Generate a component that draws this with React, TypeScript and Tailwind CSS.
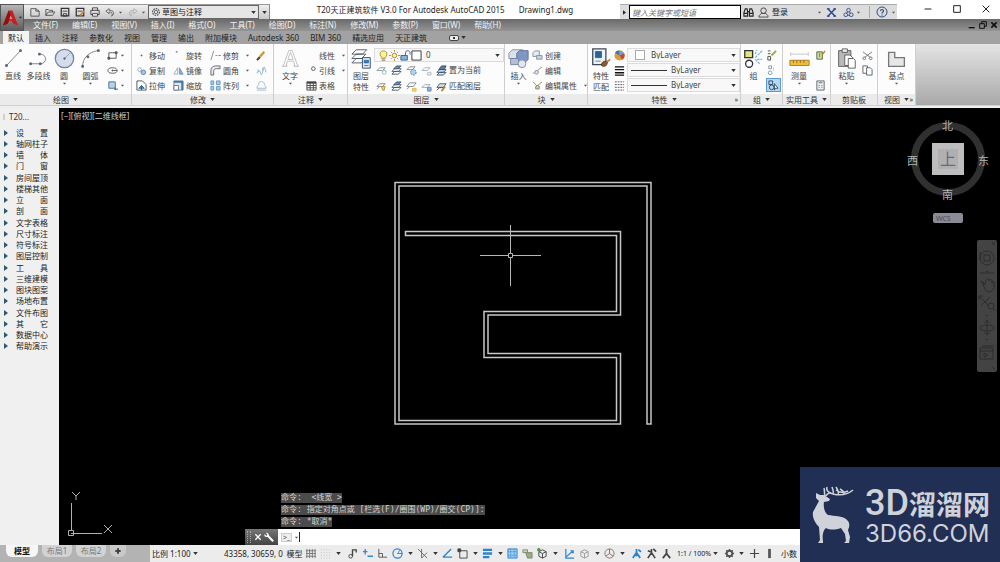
import { useState } from "react"
import type { ReactNode } from "react"
import { clsx } from "clsx"

interface IconProps {
  children: ReactNode
  box?: number
  className?: string
}

function Icon({ children, box = 12, className = "w-[11px] h-[11px]" }: IconProps) {
  return (
    <svg
      viewBox={`0 0 ${box} ${box}`}
      className={clsx("shrink-0", className)}
      fill="none"
      stroke="#6b7480"
      strokeWidth={1}
      aria-hidden="true"
    >
      {children}
    </svg>
  )
}

function Caret({ className = "text-[#333]" }: { className?: string }) {
  return (
    <svg viewBox="0 0 6 4" className={clsx("w-[5px] h-[3px] shrink-0", className)} aria-hidden="true">
      <path d="M0 0h6L3 4z" fill="currentColor" />
    </svg>
  )
}

function Dot() {
  return <Caret className="text-[#555] scale-75" />
}

/* ---------- icons ---------- */

const small: Record<string, ReactNode> = {
  newFile: <path d="M1 2h6l4 3v6H1zM7 2v3h4" stroke="#444" />,
  open: <path d="M1 10V3h3l1 1h4v2M1 10l3-4h8l-3 4z" stroke="#444" />,
  save: <g stroke="#333"><path d="M1.5 1.5h9v9h-9z" strokeWidth="1.5" /><path d="M3 5h6M4 8v3h4V8z" /></g>,
  saveAs: <g stroke="#333"><path d="M1.5 1.5h9v9h-9z" strokeWidth="1.5" /><path d="M3 5h6" /><path d="M6 10l5-5" stroke="#c98a3a" strokeWidth="2" /></g>,
  print: <g stroke="#333"><path d="M3 4V1h6v3M1 4h10v5H1z" /><path d="M3 8h6v3H3z" fill="#fff" /></g>,
  undo: <path d="M5 2L1 5l4 3V6c4 0 4 2 3 5 4-3 3-7-3-7z" stroke="#555" />,
  redo: <path d="M7 2l4 3-4 3V6C3 6 3 8 4 11 0 8 1 4 7 4z" stroke="#aaa" />,
  gear: <g stroke="#555"><circle cx="6" cy="6" r="4" strokeWidth="1.5" strokeDasharray="2 1" /><circle cx="6" cy="6" r="2" /></g>,
  rect: <g stroke="#555"><path d="M2 3h8v6H2z" /><path d="M1 8h2v2H1zM9 2h2v2H9z" fill="#555" /></g>,
  ellipse: <g stroke="#555"><ellipse cx="6" cy="6" rx="5" ry="3" /><path d="M6 5v2M5 6h6" /></g>,
  hatch: <g><path d="M2 2h7v7H2z" fill="#b7d3ea" stroke="#3d6f9c" /><path d="M9 8v3M8 10h4" stroke="#555" /></g>,
  move: <path d="M6 5v2M5 6h2" stroke="#667" />,
  copy: <g><circle cx="4" cy="5" r="2" stroke="#9ab" /><circle cx="8" cy="8" r="2.5" fill="#a8c4de" stroke="#5c86ad" /></g>,
  stretch: <g><path d="M1 1h6l4 4v6H1z" stroke="#456" fill="#fff" /><path d="M3 9l3-3 3 3zM6 6v5" stroke="#245f94" fill="#6fa2cf" /></g>,
  rotate: <path d="M4 1v2M3 2h2" stroke="#889" />,
  mirror: <g><path d="M5 10V3l-4 7z" stroke="#aab" /><path d="M7 10V3l4 7z" fill="#8db2d6" stroke="#6c93bb" /></g>,
  scale: <g><path d="M1 1h10v10H1z" fill="#dfe9f2" stroke="#6d8296" /><path d="M1 6h5v5H1z" fill="#fff" /><path d="M1 2h10M10 1v10" stroke="#3e79ad" strokeWidth="2" /></g>,
  trim: <path d="M4 1L1 11M6 6h2M9 6h3" stroke="#889" />,
  fillet: <path d="M1 11V6c0-3 2-5 5-5h5v3H7C5 4 4 5 4 7v4z" stroke="#667" fill="#e5e9ed" />,
  array: <g fill="#a9cbe8" stroke="#6497c2"><path d="M1 1h3v4H1zM7 1h4v4H7zM1 7h3v4H1zM7 7h4v4H7z" /></g>,
  erase: <g><path d="M2 10l7-8" stroke="#c8973f" strokeWidth="2.5" /><path d="M1 11l3-3" stroke="#5b3b1e" strokeWidth="2" /></g>,
  explode: <g stroke="#86aed1"><path d="M1 9c2-4 3-4 4 0s2 0 3-5 2 1 3 4" /><path d="M2 5l1 3M7 3l1 3" /></g>,
  offset: <path d="M1 9c0-3 2-3 2-5 0-3 6-3 6 0 0 2 2 2 2 5zM1 11h10" stroke="#9bb6cc" />,
  leader: <circle cx="8" cy="4" r="2" stroke="#556" />,
  table: <g stroke="#444"><path d="M1 2h10v9H1z" /><path d="M1 3h10" strokeWidth="2" /><path d="M1 6h10M1 8.500h10M4.500 3v8M8 3v8" /></g>,
  bulb: <g><path d="M4 8C1 5 2 1 6 1s5 4 2 7v1H4z" fill="#fff19a" stroke="#a58a2c" /><path d="M4 11h4" stroke="#555" /></g>,
  sun: <g stroke="#a8872c"><circle cx="6" cy="6" r="2.500" fill="#ffefa0" /><path d="M6 0v2M6 10v2M0 6h2M10 6h2M2 2l1 1M9 9l1 1M2 10l1-1M9 3l1-1" /></g>,
  lock: <g stroke="#2f6597"><path d="M1 6h7v5H1z" fill="#87b4da" /><path d="M6 6V3c0-3 5-3 5 0v2" /></g>,
  square: <path d="M1 1h10v10H1z" fill="#fff" stroke="#333" />,
  layA: <g><path d="M1 6l3-3h6L7 6zM9 5l2 2" stroke="#8a949e" /><circle cx="9" cy="8" r="2" stroke="#8ba" /></g>,
  layB: <g stroke="#4a5a6b"><path d="M1 10l3-3h7l-3 3zM1 7l3-3h7L8 7z" fill="#fff" /><path d="M3 4l3-3h5L8 4z" fill="#5c8fbd" /></g>,
  layC: <g><path d="M1 5l3-3h6L7 5z" stroke="#7d8995" /><circle cx="8" cy="8" r="3" stroke="#3b79b3" fill="#b5d2eb" strokeDasharray="2 1" /></g>,
  layD: <g><path d="M1 6l3-3h6L7 6z" stroke="#a9b1b9" /><path d="M7 8h4v3H7z" stroke="#b8c4cf" fill="#dde7f0" /></g>,
  layE: <g stroke="#3c5165"><path d="M1 11l3-3h7l-3 3zM1 8l3-3h7L8 8z" fill="#dce6ef" /><path d="M3 5l3-4h5L9 5z" fill="#4d7fae" /></g>,
  layF: <g><path d="M1 6l3-3h6L7 6zM1 9l3-3" stroke="#7d8995" /><path d="M6 6h4l-1 4H7z" fill="#f3d66a" stroke="#b39434" /></g>,
  layG: <g><path d="M1 6l3-4h7L8 6zM1 9l3-3" stroke="#7d8995" /><path d="M7 8h4v3H7z" fill="#f5dc77" stroke="#d7b748" /></g>,
  layH: <g><path d="M1 7l3-3h6L7 7z" stroke="#a0a9b2" /><path d="M7 7h4v4H7z" fill="#8ab4da" stroke="#5b8dbb" /></g>,
  layI: <g><path d="M1 7l3-4h7L8 7zM1 10l3-3h5" stroke="#485868" fill="#dbe4ec" /><path d="M6 11l4-5" stroke="#b78337" strokeWidth="2" /></g>,
  create: <g stroke="#8693a0"><path d="M1 3l2-2h5v6H1z" fill="#e6ebf0" /><path d="M5 6h6v4H5z" fill="#c3d2e0" /></g>,
  edit: <g><path d="M1 9c3 0 2-3 5-3l5-4" stroke="#a5884a" /><circle cx="5" cy="8" r="2" stroke="#7d90a5" fill="#dce5ee" /></g>,
  editAttr: <g><path d="M1 2l4 4-1 4M11 2L6 6l2 4" stroke="#b08a3e" /><circle cx="6" cy="8" r="2" fill="#e9cf8c" stroke="#777" /></g>,
  wheel: <g stroke="none"><circle cx="6" cy="6" r="5.500" fill="#d7a036" /><path d="M6 6L1 3a5.500 5.500 0 0 1 5-2.500z" fill="#476fb5" /><path d="M6 6V.5a5.500 5.500 0 0 1 5 3z" fill="#7b9ed0" /><path d="M6 6l5-2.500a5.500 5.500 0 0 1-2 7z" fill="#c24c2c" /></g>,
  weights: <path d="M1 2h10M1 5h10M1 8.500h10M1 11h10" stroke="#111" strokeWidth="1.500" />,
  types: <path d="M1 2h10M1 5h10M1 8h10M1 11h10" stroke="#555" strokeDasharray="2 1" />,
  ungroup: <g><path d="M2 1h3M2 4h3M2 7h3v4H2z" stroke="#4a4a4a" /><path d="M6 6l5-5" stroke="#a8a52b" strokeWidth="2" /></g>,
  groupEdit: <g stroke="#8795a3"><path d="M3 1h3v3H3z" /><circle cx="4.500" cy="8.500" r="2" /><path d="M8 3v4" strokeDasharray="1 1" /></g>,
  groupSel: <g stroke="#33475c"><path d="M1 1h4v4H1z" /><circle cx="4" cy="8" r="2.500" /><path d="M7 4l4 5H8l-1 2z" fill="#fff" /></g>,
  quick: <g><path d="M2 2h6v8H2z" fill="#cfe3b1" stroke="#4d6138" /><path d="M5 3v5M8 5l3-4" stroke="#b48b26" strokeWidth="1.500" /></g>,
  calc: <g stroke="#5c646c"><path d="M2 1h8v10H2z" fill="#eee" /><path d="M4 3h4M4 6h1M7 6h1M4 8h1M7 8h1" /></g>,
  cut: <g stroke="#70767c"><path d="M1 2l8 6M11 2L3 8" /><circle cx="2.500" cy="9" r="1.500" /><circle cx="9.500" cy="9" r="1.500" /></g>,
  copyClip: <g stroke="#596068" fill="#fff"><path d="M1 1h5v8H1z" /><path d="M5 3h4l2 2v6H5z" /></g>,
  binoc: <g stroke="#222" strokeWidth="1.200"><path d="M2.500 2h2l.5 3v5H1V6zM9.500 2h-2L7 5v5h4V6zM5 5h2M1 7h4M7 7h4" /></g>,
  user: <g stroke="#444"><circle cx="6" cy="4" r="3" /><path d="M1 11c0-3 2-3 3-4h4c1 1 3 1 3 4z" /></g>,
  exchange: <g stroke="#24468e" strokeWidth="1.500"><path d="M2 2l8 8M10 2l-8 8" /><path d="M1 2h3M8 2h3M1 10h3M8 10h3" /></g>,
  a360: <g stroke="#2e4f8f"><circle cx="6" cy="3.500" r="2" /><circle cx="3" cy="8.500" r="2" /><circle cx="9" cy="8.500" r="2" /><path d="M5 5L4 7M7 5l1 2M5 9h2" /></g>,
  help: <g><circle cx="6" cy="6" r="5" stroke="#2f4d85" /><path d="M4.500 5c0-2 3-2 3 0 0 1-1.500 1-1.500 2.500M6 8.500v1" stroke="#2f4d85" strokeWidth="1.200" /></g>,
}

const large: Record<string, ReactNode> = {
  line: <g><path d="M4 20L20 3" stroke="#777" /><path d="M3 19h2v2H3zM19 2h2v2h-2z" fill="#567" stroke="#567" /></g>,
  pline: <g><path d="M3 18h11c8 0 8-11 0-11" stroke="#777" /><path d="M2 17h2v2H2zM13 17h2v2h-2zM12 6h2v2h-2z" fill="#567" stroke="#567" /></g>,
  circle: <g><circle cx="12" cy="12" r="10.500" fill="#d5dcec" stroke="#76839b" strokeWidth="1.500" /><path d="M12 12l6-6" stroke="#8e9ab0" /><circle cx="12" cy="12" r="1" fill="#567" /></g>,
  arc: <g><path d="M3 21C3 11 10 5 20 3" stroke="#777" /><path d="M2 20h2v2H2zM8 9h2v2H8zM20 2h2v2h-2z" fill="#567" stroke="#567" /></g>,
  text: <path d="M3 21h5v-1H7l1.500-5h7l1.500 5h-1v1h5v-1h-1L14 3h-4L4 20H3zM9 13l3-8 3 8z" stroke="#b5b8bc" fill="#fff" />,
  layerProps: <g stroke="#46525e"><path d="M1 17l5-5h11l-5 5zM1 12l5-5h11l-5 5zM1 7l5-5h12l-5 5z" fill="#fff" /><path d="M13 11h9v12h-9z" fill="#e4ecf5" stroke="#23405f" /><path d="M15 14h5v3h-5zM15 20h5" fill="#3a72ae" stroke="#3a72ae" /></g>,
  insert: <g><path d="M1 6l4-4h12v10H1z" fill="#dbe0ea" stroke="#8089a0" /><path d="M10 6l3-3h10v10l-3 3H10z" fill="#7f97c2" stroke="#566e99" /><path d="M3 12h9v7H3z" fill="#b3bfd5" stroke="#7180a0" /><circle cx="16" cy="18" r="4.500" fill="#e2e6ed" stroke="#7d8798" /></g>,
  match: <g><path d="M2 1h15v18H2z" fill="#eef3f8" stroke="#3d4a58" strokeWidth="1.500" /><path d="M5 4h7v7H5z" fill="#2c6296" stroke="#2c6296" /><path d="M5 15h6" /><path d="M12 20c0-5 4-6 7-4-1 5-4 6-7 4z" fill="#8c5a2b" stroke="#5a3617" /><path d="M18 16l4-3" stroke="#b48147" strokeWidth="2" /></g>,
  group: <g><path d="M2 3h9v8H2z" fill="#e4e67d" stroke="#333" strokeWidth="1.500" /><circle cx="7" cy="18" r="4" stroke="#333" strokeWidth="1.500" fill="#fff" /><path d="M14 11l8-8M14 7l2-5M16 13h6M14 13l5 5" stroke="#7fb5dc" strokeWidth="1.500" strokeDasharray="3 1" /></g>,
  measure: <g><path d="M2 7h20M2 5v4M22 5v4" stroke="#c4c4c4" /><path d="M1 14h22v6H1z" fill="#eebb3c" stroke="#a77a1d" /><path d="M5 14v3M9 14v3M13 14v3M17 14v3" stroke="#8e6714" /></g>,
  paste: <g><path d="M3 3h14v18H3z" fill="#b9b9b9" stroke="#555" /><path d="M7 1h6v4H7z" fill="#eee" stroke="#555" /><path d="M10 8h6l3 3v9h-9z" fill="#fff" stroke="#555" /><path d="M14 12h6l2 2v9h-8z" fill="#fff" stroke="#555" /></g>,
  base: <path d="M3 5h7v6h11v10H3z" fill="#e7e7e7" stroke="#777" strokeWidth="1.500" />,
}

const status: Record<string, ReactNode> = {
  grid: <path d="M2 1v10M5 1v10M8 1v10M11 1v10M1 3h11M1 6h11M1 9h11" stroke="#777" />,
  snap: <path d="M1 2h10M1 5h10M1 8h10M1 11h10" stroke="#c0c0c0" strokeDasharray="1 2" />,
  infer: <g stroke="#444"><path d="M6 9V2h4v3" strokeWidth="1.500" /><circle cx="4" cy="9" r="2" /></g>,
  dyn: <g stroke="#3489cf" strokeWidth="1.500"><path d="M1 4h5M3.500 1v6M6 9h6" /></g>,
  ortho: <path d="M2 1v9h9M2 6h4v4" stroke="#555" />,
  polar: <g stroke="#2e84cc"><circle cx="6" cy="6" r="5" strokeWidth="1.300" /><path d="M6 6h5M6 6l3-4" /></g>,
  iso: <path d="M1 1l10 10M11 5L5 11M5 1v10" stroke="#666" />,
  track: <path d="M1 10L10 1M1 10h10" stroke="#2e84cc" strokeWidth="1.500" />,
  osnap: <g stroke="#444"><path d="M3 3h8v8H3z" /><path d="M1 1h3v3H1z" fill="#444" /></g>,
  lwt: <path d="M1 2h10M1 6h10M1 10h7" stroke="#2e84cc" strokeWidth="2.500" />,
  trans: <g stroke="#2e84cc"><path d="M1 1h10v10H1z" fill="#9fcbed" /><path d="M1 4h10M1 8h10M4 1v10M8 1v10" strokeDasharray="1 1" /></g>,
  cycle: <g stroke="#7a8a72"><path d="M1 2h5v3H1z" fill="#c9d6bd" /><path d="M4 5h7v6H6z" fill="#94ad82" /></g>,
  osnap3d: <g stroke="#444"><path d="M2 4l4-2 4 2v5l-4 2-4-2zM2 4l4 2 4-2M6 6v5" /><circle cx="2" cy="2" r="1.500" fill="#4f9a4a" stroke="#4f9a4a" /></g>,
  ducs: <g stroke="#2e84cc" strokeWidth="1.300"><path d="M2 1v10h9M2 10l8-7M7 3h3v3" /></g>,
  filter: <path d="M2 4l4-2 4 2v5l-4 2-4-2zM2 4l4 2 4-2M6 6v5" stroke="#999" />,
  gizmo: <g stroke="#777"><circle cx="6" cy="6" r="5" /><path d="M6 1v5l4 3M6 6L2 9" stroke="#a45a50" /></g>,
  annVis: <path d="M6 1v4L2 11M6 5l4 6M3 8h6M8 2l3 2" stroke="#2e84cc" strokeWidth="2" />,
  annAuto: <path d="M6 1v4L2 11M6 5l4 6M8 1l3 3M2 3l3 1" stroke="#444" strokeWidth="1.800" />,
  annScale: <path d="M6 1v5L2 11M6 6l4 5M5 6h2" stroke="#444" strokeWidth="2" />,
  cog: <g stroke="#555"><circle cx="6" cy="6" r="3" strokeWidth="2" /><path d="M6 1v2M6 9v2M1 6h2M9 6h2M2.500 2.500l1 1M8.500 8.500l1 1M9.500 2.500l-1 1M3.500 8.500l-1 1" strokeWidth="1.500" /></g>,
  plus: <path d="M6 1v10M1 6h10" stroke="#444" strokeWidth="1.300" />,
  bar: <path d="M6 1v10" stroke="#555" strokeWidth="3" />,
}

/* ---------- ribbon parts ---------- */

function BigButton({ icon, lines, menu, className }: { icon: string; lines: string[]; menu?: boolean; className?: string }) {
  return (
    <button className={clsx("flex flex-col items-center shrink-0", className)}>
      <Icon box={24} className="w-[21px] h-[21px]">{large[icon]}</Icon>
      {lines.map((line) => (
        <span key={line} className="h-[11px] leading-[13px] whitespace-nowrap">{line}</span>
      ))}
      {menu && <span className="mt-0.5 leading-none flex"><Dot /></span>}
    </button>
  )
}

interface SmallProps {
  icon?: string
  label?: string
  name?: string
  menu?: boolean
}

function SmallButton({ icon, label, name, menu }: SmallProps) {
  return (
    <button aria-label={label ?? name} className="flex items-center h-[15px] w-full gap-0.5 whitespace-nowrap">
      {icon ? <Icon>{small[icon]}</Icon> : <span className="w-[11px]" />}
      {label && <span>{label}</span>}
      {menu && <span className={clsx("flex", label && "ml-1")}><Dot /></span>}
    </button>
  )
}

function Stack({ items, className }: { items: SmallProps[]; className?: string }) {
  return (
    <div className={clsx("flex flex-col shrink-0", className)}>
      {items.map((item, i) => (
        <SmallButton key={i} {...item} />
      ))}
    </div>
  )
}

interface PanelProps {
  title: string
  menu?: boolean
  launcher?: boolean
  className: string
  children: ReactNode
}

function Panel({ title, menu = true, launcher, className, children }: PanelProps) {
  return (
    <section className={clsx("flex flex-col shrink-0 border-r border-[#cfcfcf] bg-[#fcfcfc]", className)}>
      <div className="flex h-[50px] pt-1">{children}</div>
      <div className="relative flex items-center justify-center gap-1 h-[11px] bg-[#ebebeb] text-[#333] whitespace-nowrap">
        <span>{title}</span>
        {menu && <Caret />}
        {launcher && <span className="absolute right-0.5 text-[7px]">»</span>}
      </div>
    </section>
  )
}

function Combo({ label, value, children }: { label: string; value: string; children?: ReactNode }) {
  return (
    <div className="flex items-center h-[14px] w-full gap-1 px-[3px] border border-[#dcdcdc] bg-[#f8f8f8]">
      {children}
      <select aria-label={label} className="flex-1 min-w-0 appearance-none bg-transparent p-0 h-full outline-none">
        <option>{value}</option>
      </select>
      <Caret />
    </div>
  )
}

function Ribbon() {
  return (
    <div className="flex h-[61px] text-[8px] leading-none text-[#444]">
      <Panel title="绘图" className="w-[132px]">
        <BigButton icon="line" lines={["直线"]} className="w-[26px]" />
        <BigButton icon="pline" lines={["多段线"]} className="w-[25px]" />
        <BigButton icon="circle" lines={["圆"]} menu className="w-[26px]" />
        <BigButton icon="arc" lines={["圆弧"]} menu className="w-[27px]" />
        <Stack
          className="w-[24px] pl-[3px]"
          items={[
            { icon: "rect", name: "矩形", menu: true },
            { icon: "ellipse", name: "椭圆", menu: true },
            { icon: "hatch", name: "填充", menu: true },
          ]}
        />
      </Panel>

      <Panel title="修改" className="w-[142px]">
        <Stack
          className="w-[41px] pl-1"
          items={[{ icon: "move", label: "移动" }, { icon: "copy", label: "复制" }, { icon: "stretch", label: "拉伸" }]}
        />
        <Stack
          className="w-[37px]"
          items={[{ icon: "rotate", label: "旋转" }, { icon: "mirror", label: "镜像" }, { icon: "scale", label: "缩放" }]}
        />
        <Stack
          className="w-[46px]"
          items={[
            { icon: "trim", label: "修剪", menu: true },
            { icon: "fillet", label: "圆角", menu: true },
            { icon: "array", label: "阵列", menu: true },
          ]}
        />
        <Stack
          className="w-[14px]"
          items={[{ icon: "erase", name: "删除" }, { icon: "explode", name: "分解" }, { icon: "offset", name: "偏移" }]}
        />
      </Panel>

      <Panel title="注释" className="w-[74px]">
        <BigButton icon="text" lines={["文字"]} menu className="w-[32px]" />
        <Stack
          className="w-[40px]"
          items={[{ label: "线性", menu: true }, { icon: "leader", label: "引线", menu: true }, { icon: "table", label: "表格" }]}
        />
      </Panel>

      <Panel title="图层" className="w-[157px]">
        <BigButton icon="layerProps" lines={["图层", "特性"]} className="w-[26px]" />
        <div className="flex flex-col flex-1">
          <Combo label="图层" value="0">
            <div className="flex">
              <Icon>{small.bulb}</Icon>
              <Icon>{small.sun}</Icon>
              <Icon>{small.lock}</Icon>
              <Icon>{small.square}</Icon>
            </div>
          </Combo>
          {[
            { icons: ["layA", "layB", "layC", "layD", "layE"], label: "置为当前" },
            { icons: ["layF", "layB", "layG", "layH", "layI"], label: "匹配图层" },
          ].map((row) => (
            <div key={row.label} className="flex items-center h-4 gap-1 pl-0.5">
              {row.icons.slice(0, 4).map((name) => (
                <button key={name} aria-label={name}><Icon>{small[name]}</Icon></button>
              ))}
              <button className="flex items-center gap-0.5 whitespace-nowrap">
                <Icon>{small[row.icons[4]]}</Icon>
                {row.label}
              </button>
            </div>
          ))}
        </div>
      </Panel>

      <Panel title="块" className="w-[83px]">
        <BigButton icon="insert" lines={["插入"]} menu className="w-[27px]" />
        <Stack
          items={[
            { icon: "create", label: "创建" },
            { icon: "edit", label: "编辑" },
            { icon: "editAttr", label: "编辑属性", menu: true },
          ]}
        />
      </Panel>

      <Panel title="特性" launcher className="w-[153px]">
        <BigButton icon="match" lines={["特性", "匹配"]} className="w-[26px]" />
        <Stack
          className="w-[13px]"
          items={[{ icon: "wheel", name: "颜色" }, { icon: "weights", name: "线宽" }, { icon: "types", name: "线型" }]}
        />
        <div className="flex flex-col flex-1 gap-px">
          <Combo label="对象颜色" value="ByLayer">
            <span className="w-2.5 h-2.5 ml-1 mr-0.5 border border-[#aaa] bg-white" />
          </Combo>
          <Combo label="线宽" value="ByLayer"><span className="w-9 h-px bg-[#333]" /></Combo>
          <Combo label="线型" value="ByLayer"><span className="w-9 h-px bg-[#333]" /></Combo>
        </div>
      </Panel>

      <Panel title="组" className="w-[42px]">
        <BigButton icon="group" lines={["组"]} className="w-[25px]" />
        <div className="flex flex-col">
          <SmallButton icon="ungroup" name="解除编组" />
          <SmallButton icon="groupEdit" name="组编辑" />
          <button aria-label="启用组选择" className="flex items-center justify-center w-[15px] h-[14px] border border-[#5a9bd0] bg-[#b5d8f2]">
            <Icon>{small.groupSel}</Icon>
          </button>
        </div>
      </Panel>

      <Panel title="实用工具" className="w-[48px]">
        <BigButton icon="measure" lines={["测量"]} menu className="w-[32px]" />
        <Stack className="w-[13px]" items={[{ icon: "quick", name: "快速选择" }, {}, { icon: "calc", name: "计算器" }]} />
      </Panel>

      <Panel title="剪贴板" menu={false} className="w-[47px]">
        <BigButton icon="paste" lines={["粘贴"]} menu className="w-[31px]" />
        <Stack className="w-[13px]" items={[{ icon: "cut", name: "剪切" }, { icon: "copyClip", name: "复制" }]} />
      </Panel>

      <Panel title="视图" launcher className="w-[38px]">
        <BigButton icon="base" lines={["基点"]} menu className="w-full" />
      </Panel>
      <div className="flex-1 bg-linear-to-b from-[#e4e4e4] to-[#a9a9a9]" />
    </div>
  )
}

/* ---------- header ---------- */

const menus = [
  "文件(F)", "编辑(E)", "视图(V)", "插入(I)", "格式(O)", "工具(T)",
  "绘图(D)", "标注(N)", "修改(M)", "参数(P)", "窗口(W)", "帮助(H)",
]

const ribbonTabs = [
  "默认", "插入", "注释", "参数化", "视图", "管理", "输出", "附加模块",
  "Autodesk 360", "BIM 360", "精选应用", "天正建筑",
]

function TitleBar() {
  return (
    <div className="flex h-[19px] bg-white">
      <div className="flex items-center mt-1 w-[246px] border-t border-[#999] bg-linear-to-b from-[#eee] to-[#c9c9c9]">
        <div className="flex items-center gap-[5px] pl-[6px] w-[124px]">
          {["newFile", "open", "save", "saveAs", "print"].map((name) => (
            <button key={name} aria-label={name}><Icon className="w-2.5 h-2.5">{small[name]}</Icon></button>
          ))}
          <button aria-label="放弃" className="flex items-center gap-[3px]"><Icon className="w-2.5 h-2.5">{small.undo}</Icon><Dot /></button>
          <button aria-label="重做" className="flex items-center gap-[3px]"><Icon className="w-2.5 h-2.5">{small.redo}</Icon><Dot /></button>
        </div>
        <div className="flex items-center flex-1 h-[14px] px-0.5 gap-px border border-[#666] bg-[#e6e6e6]">
          <Icon className="w-2.5 h-2.5">{small.gear}</Icon>
          <select aria-label="工作空间" className="flex-1 min-w-0 appearance-none bg-transparent p-0 text-[#111] outline-none">
            <option>草图与注释</option>
          </select>
          <Caret />
        </div>
        <button aria-label="自定义快速访问工具栏" className="flex items-center justify-center w-[11px] h-full border-r border-[#888]"><Caret /></button>
      </div>
      <h1 className="flex flex-1 items-center justify-center gap-[14px] text-[#222] whitespace-nowrap">
        <span>T20天正建筑软件 V3.0 For Autodesk AutoCAD 2015</span>
        <span>Drawing1.dwg</span>
      </h1>
      <div className="flex items-center mt-1 w-[277px] border-t border-[#aaa] bg-[#dcdcdc]">
        <button aria-label="展开" className="w-[9px] flex justify-center"><Caret className="-rotate-90 text-[#222]" /></button>
        <input
          aria-label="搜索"
          placeholder="键入关键字或短语"
          className="w-[112px] h-[14px] px-0.5 border border-black bg-white italic placeholder:text-[#777] outline-none"
        />
        <button aria-label="搜索" className="ml-0.5"><Icon>{small.binoc}</Icon></button>
        <button className="flex items-center gap-[3px] ml-1 text-[#222]"><Icon>{small.user}</Icon>登录</button>
        <span className="flex ml-auto"><Dot /></span>
        <button aria-label="Exchange" className="ml-1"><Icon>{small.exchange}</Icon></button>
        <button aria-label="A360" className="flex items-center gap-0.5 ml-1.5 mr-2"><Icon>{small.a360}</Icon><Dot /></button>
        <button aria-label="帮助" className="flex items-center gap-[3px] pl-1.5 pr-px border-l border-[#aaa]"><Icon className="w-3 h-3">{small.help}</Icon><Dot /></button>
      </div>
      <div className="flex w-[103px] justify-end">
        <button aria-label="最小化" className="flex items-center justify-center w-[29px] pb-0.5"><Icon className="w-2 h-2"><path d="M1 6h10" stroke="#222" strokeWidth="1.500" /></Icon></button>
        <button aria-label="最大化" className="flex items-center justify-center w-[29px] pb-0.5"><Icon className="w-2 h-2"><path d="M1 1h10v10H1z" stroke="#222" strokeWidth="1.500" /></Icon></button>
        <button aria-label="关闭" className="flex items-center justify-center w-[29px] pb-0.5"><Icon className="w-2 h-2"><path d="M1 1l10 10M11 1L1 11" stroke="#222" strokeWidth="1.500" /></Icon></button>
      </div>
    </div>
  )
}

function Header() {
  const [active, setActive] = useState("默认")

  return (
    <header className="text-[8px] leading-none">
      <div className="flex">
        <div className="w-6 pt-1 bg-white">
          <button aria-label="应用程序菜单" className="relative flex items-center justify-center w-full h-[27px] border border-[#555] bg-linear-to-b from-[#b5b5b5] to-[#5e5e5e]">
            <svg viewBox="0 0 16 18" className="w-[15px] h-[18px] mr-1" aria-hidden="true">
              <path d="M0 17L6 1h4l6 16-5-2-2-3H7l-2 3z" fill="#c81e1e" />
              <path d="M6 1L0 17l5-2 3-9z" fill="#8e1010" />
              <path d="M7 10l1-4 2 4z" fill="#fff" opacity=".5" />
            </svg>
            <Caret className="text-[#222] absolute right-0 scale-75" />
          </button>
        </div>
        <div className="flex-1">
          <TitleBar />
          <nav className="flex items-center h-3 pl-[9px] gap-[14px] bg-linear-to-b from-[#6a6a6a] to-[#949494] text-[#f2f2f2]">
            {menus.map((menu) => (
              <button key={menu} className="whitespace-nowrap">{menu}</button>
            ))}
            <div className="flex gap-[3px] ml-auto pr-0.5">
              <button aria-label="最小化图形"><Icon className="w-2 h-2"><path d="M1 10h9" stroke="#111" strokeWidth="2" /></Icon></button>
              <button aria-label="还原图形"><Icon className="w-2 h-2"><path d="M4 4V1h7v7H8M1 4h7v7H1z" stroke="#111" strokeWidth="1.500" /></Icon></button>
              <button aria-label="关闭图形"><Icon className="w-2 h-2"><path d="M2 2l8 8M10 2l-8 8" stroke="#111" strokeWidth="2.500" /></Icon></button>
            </div>
          </nav>
        </div>
      </div>
      <div className="flex gap-px h-[13px] pl-[3px] bg-[#a2a2a2] text-[#222]">
        {ribbonTabs.map((tab) => (
          <button
            key={tab}
            onClick={() => setActive(tab)}
            className={clsx("px-[5px] whitespace-nowrap", tab === active && "bg-[#f3f3f3]")}
          >
            {tab}
          </button>
        ))}
        <button aria-label="功能区显示" className="flex items-center gap-0.5 ml-4">
          <span className="flex items-center justify-center w-2.5 h-1.5 rounded-xs border border-[#444] bg-[#eee]"><span className="w-0.5 h-0.5 bg-[#333]" /></span>
          <Caret />
        </button>
      </div>
      <Ribbon />
      <div className="h-[3px] border-t border-[#d0d0d0] bg-[#eee]" />
    </header>
  )
}

/* ---------- side bar ---------- */

const toolMenus = [
  "设置", "轴网柱子", "墙体", "门窗", "房间屋顶", "楼梯其他", "立面", "剖面", "文字表格", "尺寸标注",
  "符号标注", "图层控制", "工具", "三维建模", "图块图案", "场地布置", "文件布图", "其它", "数据中心", "帮助演示",
]

function SideBar() {
  return (
    <aside className="w-[59px] shrink-0 bg-[#f0f0f0] text-[8px] leading-none text-[#222]">
      <div className="flex items-center h-[17px] pl-[3px] gap-1 text-[#333]">
        <span className="w-0.5 h-1.5 bg-[#d0d0d0]" />T20...
      </div>
      <ul className="flex flex-col h-[227px] pt-0.5">
        {toolMenus.map((item) => (
          <li key={item} className="flex flex-1 min-h-0">
            <button className="flex items-center w-full pl-1 gap-2">
              <svg viewBox="0 0 4 6" className="w-1 h-1.5" aria-hidden="true"><path d="M0 0l4 3-4 3z" fill="#2c5a70" /></svg>
              <span className={clsx("flex w-8", item.length === 2 && "justify-between")}>
                {item.length === 2 ? [...item].map((ch) => <span key={ch}>{ch}</span>) : item}
              </span>
            </button>
          </li>
        ))}
      </ul>
    </aside>
  )
}

/* ---------- drawing area ---------- */

function ViewCube() {
  return (
    <div className="absolute right-[11px] top-2.5 w-[82px] h-[84px] text-[11px] leading-none text-[#b4b4b4]">
      <svg viewBox="0 0 82 84" className="w-full h-full" aria-hidden="true">
        <circle cx="41" cy="41" r="33.500" fill="none" stroke="#303030" strokeWidth="7" />
        <path d="M25 25h32v32H25z" fill="#bdbdbd" />
        <path d="M31 31h20v20H31z" fill="#b0b0b2" />
      </svg>
      <span className="absolute left-[35px] top-0.5">北</span>
      <span className="absolute left-[35px] bottom-0.5">南</span>
      <span className="absolute left-0 top-[37px]">西</span>
      <span className="absolute right-0 top-[37px]">东</span>
      <span className="absolute left-[33px] top-[33px] text-[16px] text-[#6b6c75]">上</span>
    </div>
  )
}

function NavBar() {
  return (
    <div className="absolute right-[3px] top-[132px] w-5 h-[132px] rounded-xs bg-[#434343]">
      <svg viewBox="0 0 20 132" className="w-full h-full" fill="none" stroke="#2d2d2d" aria-hidden="true">
        <path d="M15 2l3 3M18 2l-3 3M3 33h14M15 127l3 3" />
        <circle cx="10" cy="18" r="7" />
        <path d="M7 15h6v6H7zM3 12v8M9 31l1 1 1-1" />
        <path d="M5 42l3 7c1 4 8 4 9-1v-5c0-2-2-2-2 0v-2c0-2-3-2-3 0v-1c0-2-3-2-3 0l-1 5-2-3c-1-1-2-1-2 0z" />
        <path d="M3 57l9 9M13 57l-9 9M2 60V56h4" />
        <circle cx="14" cy="66" r="3" />
        <path d="M16 68l2 3M9 75l1 1 1-1" />
        <ellipse cx="10" cy="88" rx="7" ry="3" />
        <path d="M10 80v15M7 83l3-3 3 3M7 92l3 3 3-3M9 99l1 1 1-1" />
        <path d="M3 108h13v11H3zM3 111h13M7 113v4l4-2zM5 106h12" />
      </svg>
    </div>
  )
}

function DrawingArea() {
  return (
    <main className="relative flex-1 min-w-0 overflow-hidden bg-black text-[8px] leading-none">
      <p className="pl-0.5 pt-1 text-[#ccc]">[−][俯视][二维线框]</p>

      {/* double-line walls */}
      <svg viewBox="0 0 260 246" className="absolute left-[334px] top-[72px] w-[260px] h-[246px]" fill="none" aria-hidden="true">
        <path
          d="M2 2.500H258V244H254V6H6V240.500H223.500V177.500H91V131.500H223.500V55.500H12.500V51.500H227.500V135H95V173.500H227.500V244H2Z"
          transform="translate(0 0)"
          stroke="#c6c6c6"
          strokeWidth="1.500"
        />
      </svg>

      {/* cursor */}
      <svg viewBox="0 0 61 61" className="absolute left-[421px] top-[117px] w-[61px] h-[61px]" fill="none" stroke="#b8b8b8" aria-hidden="true">
        <path d="M30.500 0V28M30.500 33V61M0 30.500H28M33 30.500H61M28.500 28.500h4v4h-4z" />
      </svg>

      {/* UCS axes */}
      <svg viewBox="0 0 50 50" className="absolute left-[8px] bottom-[3px] w-[50px] h-[50px]" fill="none" stroke="#b0b0b0" aria-hidden="true">
        <path d="M4.500 11V39M1.500 38.500h5v5h-5zM4 41.500H35M5 0l4 4 4-4M9 4v4M37 33l8 8M45 33l-8 8" />
      </svg>

      <ViewCube />
      <button className="absolute right-[37px] top-[105px] flex items-center w-[30px] h-2.5 pl-[3px] rounded-xs bg-[#8b8b95] text-[7px] text-[#4a4a55]">WCS</button>
      <NavBar />

      <div className="absolute left-[186px] right-0 bottom-0">
        <div className="flex flex-col items-start gap-[2px] pl-9 pb-0.5 font-['DejaVu_Sans_Mono','Noto_Sans_CJK_SC',monospace] text-[#d2d2d2]">
          {["命令:  <线宽 >", "命令: 指定对角点或 [栏选(F)/圈围(WP)/圈交(CP)]:", "命令: *取消*"].map((line) => (
            <p key={line} className="h-2.5 leading-[10px] bg-[#4b4b4b] whitespace-pre">{line}</p>
          ))}
        </div>
        <div className="flex h-4 bg-white">
          <div className="flex items-center justify-between w-[33px] pl-0.5 pr-1 bg-linear-to-b from-[#777] to-[#444]">
            <span className="w-1 h-3 border-x border-dotted border-[#aaa]" />
            <button aria-label="关闭命令行"><Icon className="w-2 h-2"><path d="M2 2l8 8M10 2l-8 8" stroke="#fff" strokeWidth="2" /></Icon></button>
            <button aria-label="自定义"><Icon className="w-2.5 h-2.5"><path d="M4 4l7 7" stroke="#fff" strokeWidth="2.500" /><path d="M1 3c0 3 4 3 4 0L3 1" stroke="#fff" strokeWidth="1.500" /></Icon></button>
          </div>
          <button aria-label="最近使用的命令" className="flex items-center gap-0.5 pl-[3px]">
            <span className="px-px border border-[#ccc] bg-[#eee] text-[7px] text-[#555]">&gt;_</span>
            <Dot />
          </button>
          <input aria-label="命令" className="order-last flex-1 min-w-0 px-1 outline-none" />
          <span className="self-center w-px h-2.5 bg-[#222]" />
        </div>
      </div>
    </main>
  )
}

/* ---------- status bar ---------- */

const statusGroups: string[][] = [
  ["grid", "snap", "v"],
  ["infer", "dyn", "ortho", "polar", "v", "iso", "v", "track", "osnap", "v", "lwt", "v", "trans", "cycle", "osnap3d", "v"],
  ["ducs", "filter", "v", "gizmo", "v"],
  ["annVis", "annAuto", "annScale"],
]

function StatusItem({ name }: { name: string }) {
  if (name === "v") {
    return <button aria-label="选项" className="flex items-center justify-center w-2.5"><Caret /></button>
  }
  return <button aria-label={name} className="flex items-center justify-center w-[15px]"><Icon>{status[name]}</Icon></button>
}

function StatusBar() {
  return (
    <footer className="flex h-[17px] bg-[#ececec] text-[8px] leading-none text-[#222] whitespace-nowrap">
      <div className="flex items-start w-[150px] pl-1.5 gap-1 bg-[#b3b3b3] text-[#777]">
        <button className="h-3 w-8 rounded-b-md bg-[#f6f6f6] font-bold text-[#111]">模型</button>
        <button className="h-3 w-[30px] rounded-b-md bg-[#d2d2d2]">布局1</button>
        <button className="h-3 w-[30px] rounded-b-md bg-[#d2d2d2]">布局2</button>
        <button aria-label="新建布局" className="flex items-center justify-center h-3 w-4 rounded-b-md bg-[#c9c9c9]">
          <Icon className="w-2 h-2"><path d="M6 2v8M2 6h8" stroke="#444" strokeWidth="3" /></Icon>
        </button>
      </div>
      <button className="flex items-center w-[74px] gap-0.5 pl-0.5">比例 1:100 <Caret /></button>
      <span className="flex items-center w-[62px]">43358, 30659, 0</span>
      <button className="w-[17px]">模型</button>
      {statusGroups.map((group, i) => (
        <div key={i} className={clsx("flex", i > 0 && "ml-0.5")}>
          {group.map((name, j) => (
            <StatusItem key={j} name={name} />
          ))}
        </div>
      ))}
      <button className="flex items-center gap-0.5 ml-[3px] mr-1 text-[7px]">1:1 / 100% <Caret /></button>
      <StatusItem name="cog" />
      <StatusItem name="v" />
      <StatusItem name="plus" />
      <StatusItem name="bar" />
      <button className="ml-1">小数</button>
    </footer>
  )
}

function Watermark() {
  return (
    <div className="absolute right-0 bottom-0 flex w-[200px] h-[95px] pl-1.5 bg-[#222f55] text-[#cfd2d9]">
      <svg viewBox="0 0 56 68" className="w-14 h-[68px] mt-[13px]" aria-hidden="true">
        <path
          d="M10 13l4 2h4l6 4-1 2-5 1c-1 6 1 11 4 13 7 1 14 1 18 4 4 3 4 7 2 11l2 7-1 6h-5l2-2-1-7-4-6c-6 2-11 2-15 0-3 2-4 8-3 13v2h-5l2-3-1-13c-4-4-7-10-6-15l6-11-3-3z"
          fill="currentColor"
        />
        <path
          d="M19 16c-1-3 0-4-1-8M20 16c2-4 4-3 7-2 8 2 14 1 20-4M25 13c-3-1-5-3-4-6M27 14c1-2 0-4-1-7M32 15c1-2 0-5-2-8M38 14c0-2-2-4-4-5M30 10c4 3 8 3 12 1"
          fill="none"
          stroke="currentColor"
          strokeWidth="1.500"
        />
      </svg>
      <div className="flex flex-col pl-[3px] pt-[19px] whitespace-nowrap">
        <p className="flex items-center h-[34px] leading-none">
          <span className="font-['Roboto',sans-serif] text-[36px] font-medium">3D</span>
          <span className="font-['Noto_Sans_CJK_SC',sans-serif] text-[27px] font-bold">溜溜网</span>
        </p>
        <p className="mt-[3px] font-['Inter',sans-serif] text-[24px] leading-[22px]">3D66.COM</p>
      </div>
    </div>
  )
}

export default function App() {
  return (
    <div className="relative flex flex-col h-screen overflow-hidden select-none bg-[#f0f0f0] font-['Noto_Sans','Noto_Sans_CJK_SC',sans-serif]">
      <Header />
      <div className="flex flex-1 min-h-0">
        <SideBar />
        <DrawingArea />
      </div>
      <StatusBar />
      <Watermark />
    </div>
  )
}
